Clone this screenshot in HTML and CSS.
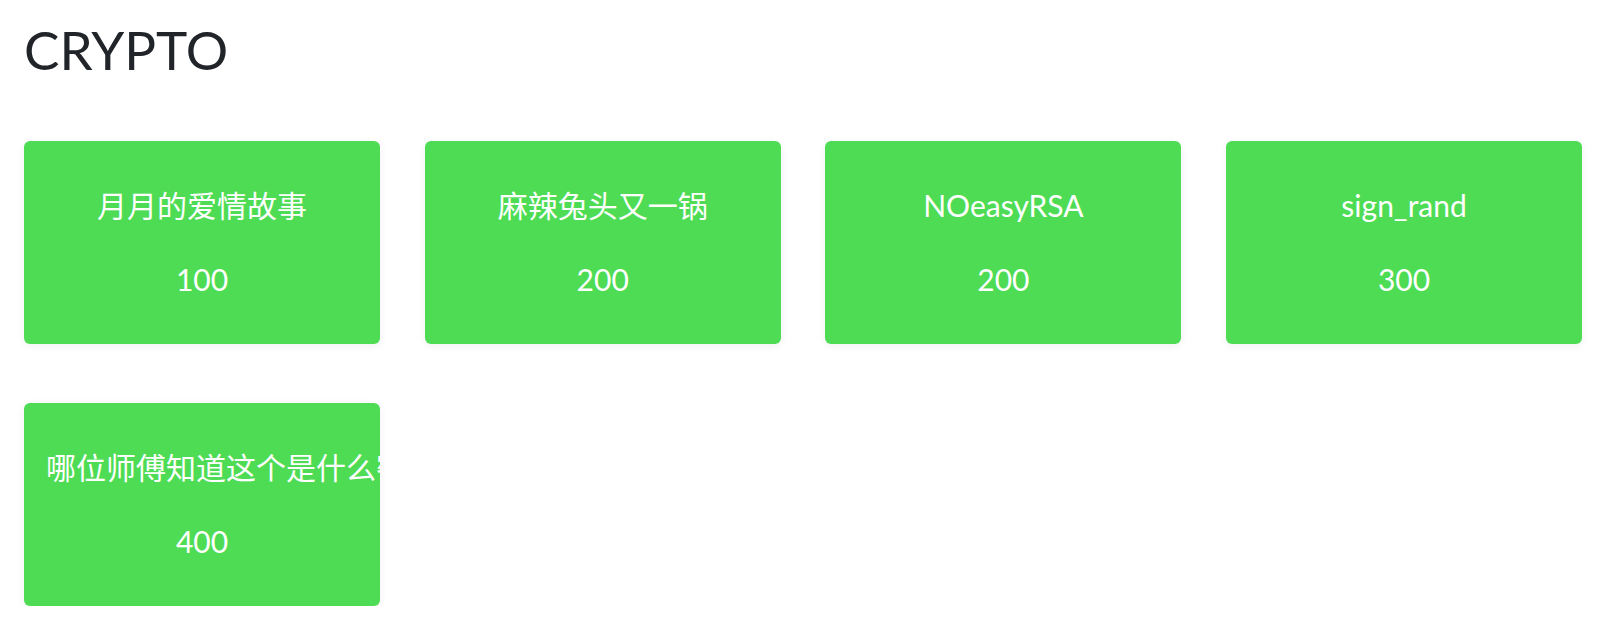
FILE: index.html
```html
<!DOCTYPE html>
<html lang="zh">
<head>
<meta charset="utf-8">
<title>CRYPTO</title>
<link rel="stylesheet" href="styles.css">
</head>
<body>
<main class="page">
  <h1 class="category">CRYPTO</h1>
  <div class="grid">
    <div class="card"><div class="card-name">月月的爱情故事</div><div class="card-value">100</div></div>
    <div class="card"><div class="card-name">麻辣兔头又一锅</div><div class="card-value">200</div></div>
    <div class="card"><div class="card-name">NOeasyRSA</div><div class="card-value">200</div></div>
    <div class="card"><div class="card-name">sign_rand</div><div class="card-value">300</div></div>
    <div class="card"><div class="card-name">哪位师傅知道这个是什么密码</div><div class="card-value">400</div></div>
  </div>
</main>
</body>
</html>
```
FILE: styles.css
```css
html, body {
  margin: 0;
  padding: 0;
  background: #ffffff;
}
.page {
  padding: 18px 0 0 24px;
  font-family: Lato, "Noto Sans CJK SC", sans-serif;
}
.category {
  margin: 0;
  font-size: 53px;
  font-weight: 400;
  line-height: 1.2;
  color: #212529;
}
.grid {
  margin-top: 59px;
  display: grid;
  grid-template-columns: repeat(4, 356px);
  column-gap: 44.7px;
  row-gap: 59px;
}
.card {
  box-sizing: border-box;
  height: 203px;
  background: #4edc55;
  border-radius: 6px;
  box-shadow: 0 2px 10px rgba(0, 0, 0, 0.06);
  color: #ffffff;
  text-align: center;
  padding: 44px 22px 0;
  overflow: hidden;
  white-space: nowrap;
}
.card-name {
  font-size: 30px;
  line-height: 40px;
}
.card-value {
  margin-top: 34px;
  font-size: 30px;
  line-height: 40px;
}
```
